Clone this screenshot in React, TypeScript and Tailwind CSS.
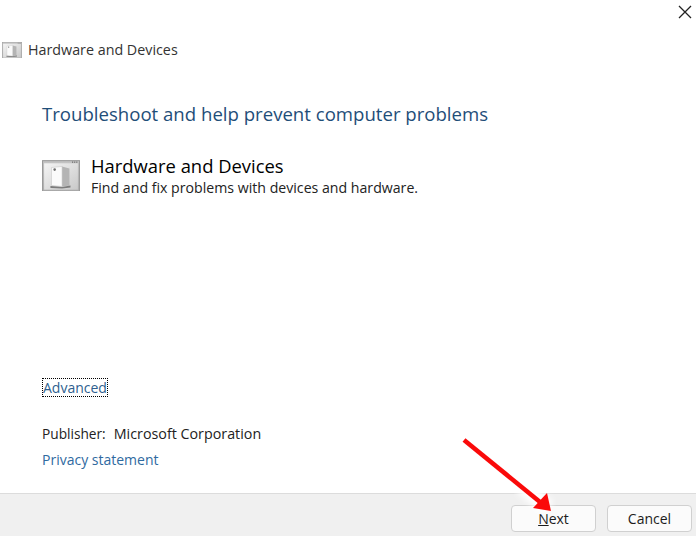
function DeviceIcon({ size, id }: { size: number; id: string }) {
  return (
    <svg width={size} height={size * 0.84} viewBox="0 0 36 30" className="shrink-0">
      <defs>
        <linearGradient id={`frame-${id}`} x1="0" y1="0" x2="0" y2="1">
          <stop offset="0" stopColor="#c4c4c4" />
          <stop offset="1" stopColor="#aeaeae" />
        </linearGradient>
        <linearGradient id={`pane-${id}`} x1="0" y1="0" x2="1" y2="1">
          <stop offset="0" stopColor="#f4f4f4" />
          <stop offset="1" stopColor="#c9c9c9" />
        </linearGradient>
      </defs>
      <rect x="0.5" y="0.5" width="35" height="29" fill={`url(#frame-${id})`} stroke="#9a9a9a" />
      <rect x="2" y="3" width="32" height="25" fill={`url(#pane-${id})`} />
      <circle cx="29" cy="1.8" r="0.6" fill="#555" />
      <circle cx="31" cy="1.8" r="0.6" fill="#555" />
      <circle cx="33" cy="1.8" r="0.6" fill="#555" />
      <path d="M19 6 L26 8 L26 24 L19 25 Z" fill="#b4b4b4" />
      <path d="M9 7 L19 6 L19 25 L9 24 Z" fill="#fbfbfb" stroke="#c4c4c4" strokeWidth="0.5" />
      <circle cx="12" cy="9" r="1.2" fill="#6f6f6f" />
      <path d="M8 24.5 L19 25.5 L27 24 L27 26 L19 27 L8 26.5 Z" fill="#7c7c7c" />
    </svg>
  );
}

export default function App() {
  const font = "font-['Open_Sans','Noto_Sans',sans-serif]";
  return (
    <div className={`relative flex h-[536px] w-[696px] flex-col overflow-hidden bg-white ${font} text-[#1c1c1c]`}>
      <div className="flex h-[100px] flex-col">
        <div className="flex justify-end pt-[5px] pr-[4px]">
          <svg width="14" height="14" viewBox="0 0 14 14" stroke="#222" strokeWidth="1.3" fill="none">
            <path d="M1 1 L13 13 M13 1 L1 13" />
          </svg>
        </div>
        <div className="flex items-center gap-[6px] pl-[2px] pt-[21px]">
          <DeviceIcon size={20} id="small" />
          <span className="text-[14.3px] leading-[20px] text-[#333]">Hardware and Devices</span>
        </div>
      </div>

      <div className="flex flex-1 flex-col pl-[42px]">
        <h1 className="text-[18.6px] leading-[28px] font-normal text-[#1f4e79]">
          Troubleshoot and help prevent computer problems
        </h1>
        <div className="mt-[26px] flex items-center gap-[11px]">
          <DeviceIcon size={38} id="large" />
          <div className="flex flex-col">
            <span className="text-[18.4px] leading-[24px] text-black">Hardware and Devices</span>
            <span className="text-[14.15px] leading-[19px] text-[#222]">Find and fix problems with devices and hardware.</span>
          </div>
        </div>
        <div className="mt-[181px] flex">
          <a className="border border-dotted border-black text-[14px] leading-[17px] text-[#2f5f8f]">Advanced</a>
        </div>
        <p className="mt-[27px] text-[14.3px] leading-[20px] text-[#222]">
          <span className="text-[13.7px]">Publisher:</span>
          <span className="ml-[8px]">Microsoft Corporation</span>
        </p>
        <a className="mt-[6px] text-[14px] leading-[20px] text-[#2f6a9f]">Privacy statement</a>
      </div>

      <div className="flex h-[43px] items-start justify-end gap-[11px] border-t border-[#dcdcdc] bg-[#f0f0f0] pt-[11px] pr-[4px]">
        <button className="h-[27px] w-[85px] rounded-[4px] border border-[#d0d0d0] bg-[#fbfbfb] text-[14px] leading-[24px] text-[#1c1c1c]">
          <span className="underline">N</span>ext
        </button>
        <button className="h-[27px] w-[85px] rounded-[4px] border border-[#d0d0d0] bg-[#fbfbfb] text-[14px] leading-[24px] text-[#1c1c1c]">
          Cancel
        </button>
      </div>

      <svg className="absolute left-[460px] top-[436px]" width="100" height="85" viewBox="0 0 100 85" fill="none">
        <defs>
          <filter id="glow" x="-30%" y="-30%" width="160%" height="160%">
            <feGaussianBlur stdDeviation="3" />
          </filter>
        </defs>
        <path d="M62 50 L88 72" stroke="#ffffff" strokeWidth="16" filter="url(#glow)" />
        <path d="M4 4 L80 66" stroke="#fa0a0a" strokeWidth="4.5" />
        <path d="M91 75 L73 72 L87 57 Z" fill="#fa0a0a" />
      </svg>
    </div>
  );
}
